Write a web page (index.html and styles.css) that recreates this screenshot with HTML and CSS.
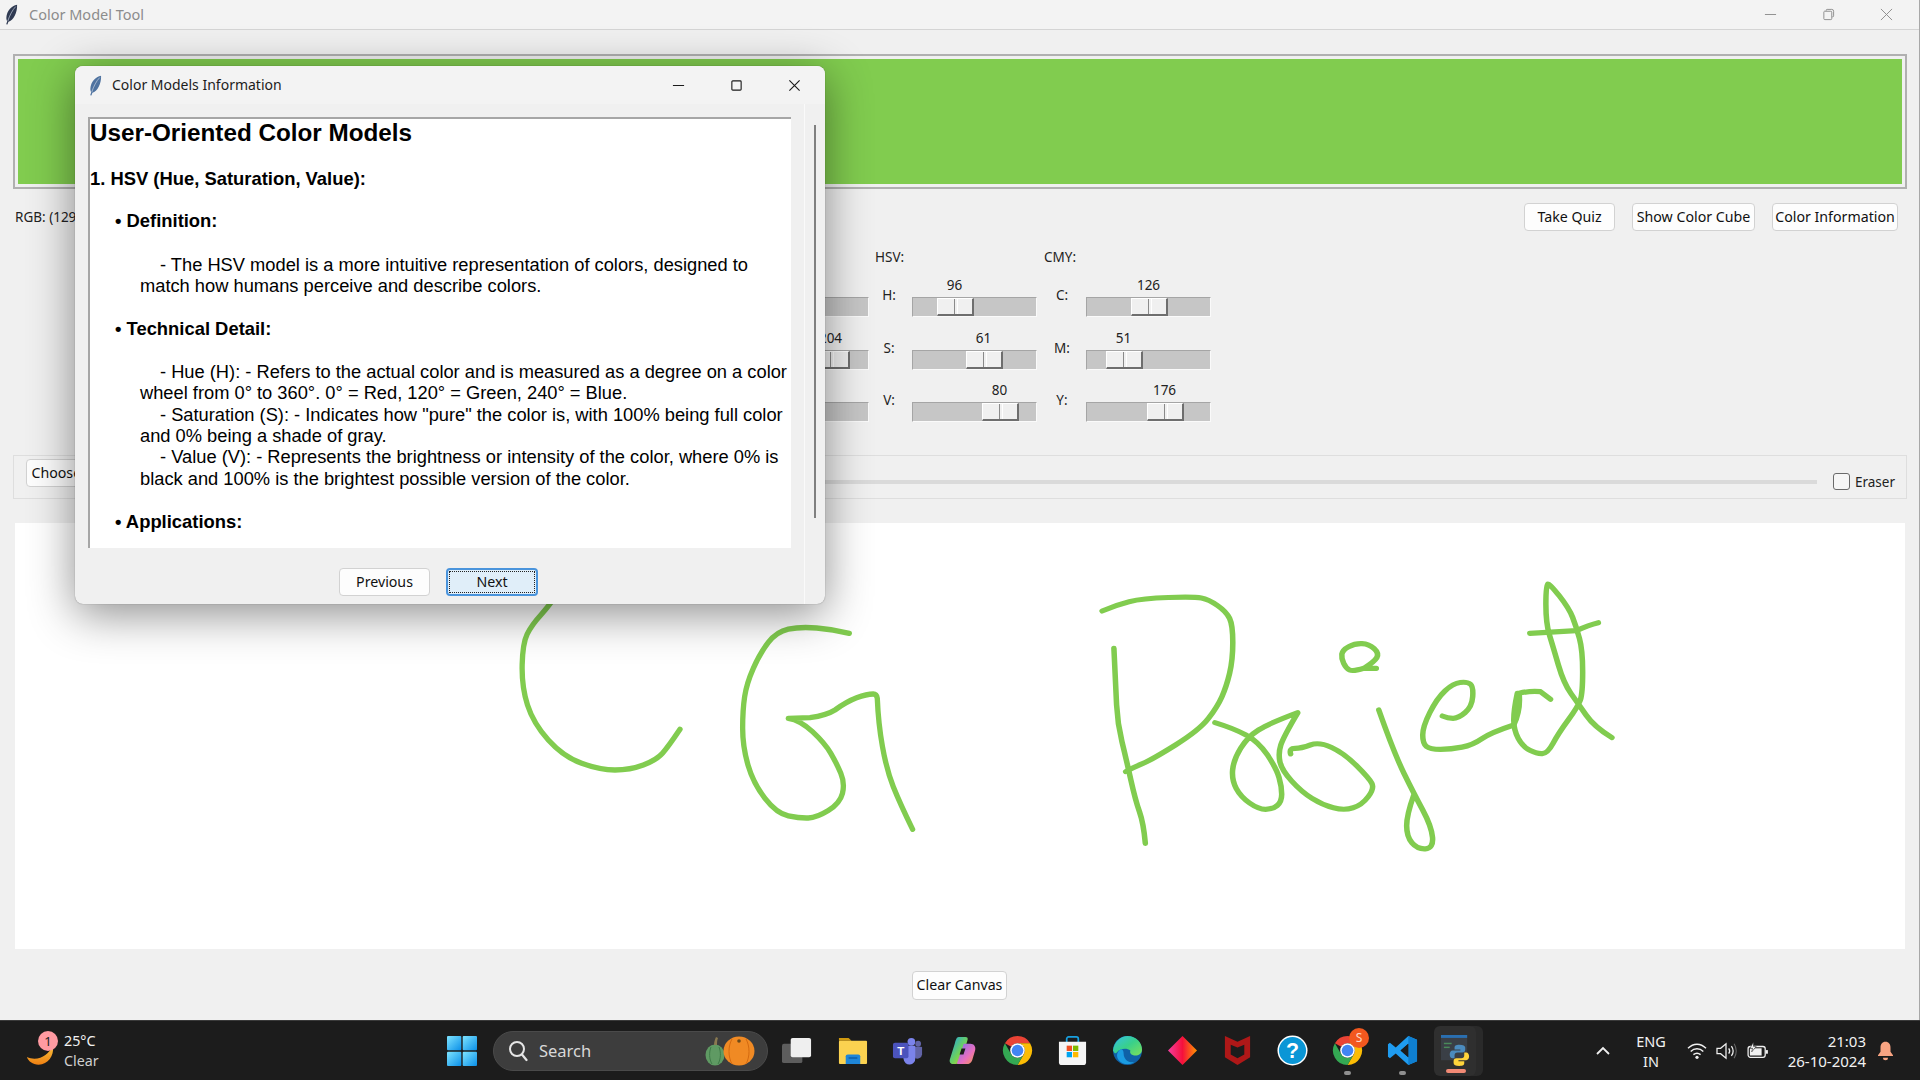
FILE: index.html
```html
<!DOCTYPE html>
<html lang="en">
<head>
<meta charset="utf-8">
<title>Color Model Tool</title>
<link rel="stylesheet" href="styles.css">
</head>
<body>
<svg class="defs" width="0" height="0" aria-hidden="true">
  <defs>
    <symbol id="feather" viewBox="0 0 14 22">
      <path d="M13 .5C7 1.500 2 7 1.500 14c-.2 1.800.3 3.300.9 4.300L1.300 21.500l1.300.3 1.100-3.100C9 17.500 13.500 9 13 .5Z"/>
      <path d="M3 18C5 12 8 6 11.500 2.500" fill="none" stroke="#cfd8e6" stroke-width=".7"/>
    </symbol>
    <symbol id="chrome" viewBox="0 0 32 32">
      <path fill="#ea4335" d="M3 8.500A15 15 0 0 1 29 8.500H16A7.500 7.500 0 0 0 9.500 12.250Z"/>
      <path fill="#fbbc04" d="M29 8.500A15 15 0 0 1 16 31L22.500 19.750A7.500 7.500 0 0 0 16 8.500Z"/>
      <path fill="#34a853" d="M16 31A15 15 0 0 1 3 8.500L9.500 19.750A7.500 7.500 0 0 0 22.500 19.750Z"/>
      <circle cx="16" cy="16" r="7.500" fill="#fff"/>
      <circle cx="16" cy="16" r="6" fill="#4285f4"/>
    </symbol>
    <linearGradient id="winGrad" x1="0" y1="0" x2="1" y2="1">
      <stop offset="0" stop-color="#7ee4ff"/><stop offset="1" stop-color="#0a8fe8"/>
    </linearGradient>
    <linearGradient id="diaGrad" x1="0" y1="0" x2="1" y2="0">
      <stop offset="0" stop-color="#f43fa0"/><stop offset=".5" stop-color="#f5103c"/><stop offset="1" stop-color="#ff9500"/>
    </linearGradient>
    <linearGradient id="edgeGrad" x1="0" y1="0" x2="1" y2="1">
      <stop offset="0" stop-color="#35c1e8"/><stop offset=".5" stop-color="#39d08a"/><stop offset="1" stop-color="#7ee05a"/>
    </linearGradient>
    <linearGradient id="copA" x1="0" y1="0" x2="1" y2="1">
      <stop offset="0" stop-color="#1aa3e8"/><stop offset=".55" stop-color="#6fd25a"/><stop offset="1" stop-color="#f2c230"/>
    </linearGradient>
    <linearGradient id="copB" x1="0" y1="0" x2="1" y2="1">
      <stop offset="0" stop-color="#7a6ff0"/><stop offset=".6" stop-color="#e86fc0"/><stop offset="1" stop-color="#f59a4a"/>
    </linearGradient>
    <linearGradient id="moonGrad" x1="0" y1="0" x2="0" y2="1">
      <stop offset="0" stop-color="#f9c23c"/><stop offset="1" stop-color="#ee7f12"/>
    </linearGradient>
  </defs>
</svg>

<div class="desktop">
  <main class="window">
    <header class="titlebar">
      <svg class="feather feather-main"><use href="#feather"/></svg>
      <span class="title-text">Color Model Tool</span>
      <div class="win-controls">
        <svg class="wc" viewBox="0 0 14 14"><path d="M1 7h12" stroke="#8a8a8a" fill="none"/></svg>
        <svg class="wc" viewBox="0 0 14 14"><path d="M4.500 3V2.500a1 1 0 0 1 1-1h5a2 2 0 0 1 2 2v5a1 1 0 0 1-1 1H11M2.500 3.500h7a1 1 0 0 1 1 1v7a1 1 0 0 1-1 1h-6.500a1 1 0 0 1-1-1v-7a1 1 0 0 1 .5-1Z" stroke="#8a8a8a" fill="none"/></svg>
        <svg class="wc" viewBox="0 0 14 14"><path d="M1 1l12 12M13 1L1 13" stroke="#8a8a8a" fill="none"/></svg>
      </div>
    </header>

    <div class="content">
      <div class="preview"><div class="swatch"></div></div>

      <div class="info-row">
        <span class="rgb-text">RGB: (129, 204, 79)</span>
        <div class="info-buttons">
          <button class="btn btn-quiz">Take Quiz</button>
          <button class="btn btn-cube">Show Color Cube</button>
          <button class="btn btn-info">Color Information</button>
        </div>
      </div>

      <div class="sliders">
        <section class="group group-rgb">
          <div class="group-title">RGB:</div>
          <div class="group-grid">
            <span class="axis">R:</span><div class="scale"><div class="scale-val" style="margin-left:43px">129</div><div class="track"><div class="thumb" style="margin-left:43px"></div></div></div>
            <span class="axis">G:</span><div class="scale"><div class="scale-val" style="margin-left:68px">204</div><div class="track"><div class="thumb" style="margin-left:68px"></div></div></div>
            <span class="axis">B:</span><div class="scale"><div class="scale-val" style="margin-left:26px">79</div><div class="track"><div class="thumb" style="margin-left:26px"></div></div></div>
          </div>
        </section>
        <section class="group group-hsv">
          <div class="group-title">HSV:</div>
          <div class="group-grid">
            <span class="axis">H:</span><div class="scale"><div class="scale-val" style="margin-left:24px">96</div><div class="track"><div class="thumb" style="margin-left:24px"></div></div></div>
            <span class="axis">S:</span><div class="scale"><div class="scale-val" style="margin-left:53px">61</div><div class="track"><div class="thumb" style="margin-left:53px"></div></div></div>
            <span class="axis">V:</span><div class="scale"><div class="scale-val" style="margin-left:69px">80</div><div class="track"><div class="thumb" style="margin-left:69px"></div></div></div>
          </div>
        </section>
        <section class="group group-cmy">
          <div class="group-title">CMY:</div>
          <div class="group-grid">
            <span class="axis">C:</span><div class="scale"><div class="scale-val" style="margin-left:44px">126</div><div class="track"><div class="thumb" style="margin-left:44px"></div></div></div>
            <span class="axis">M:</span><div class="scale"><div class="scale-val" style="margin-left:19px">51</div><div class="track"><div class="thumb" style="margin-left:19px"></div></div></div>
            <span class="axis">Y:</span><div class="scale"><div class="scale-val" style="margin-left:60px">176</div><div class="track"><div class="thumb" style="margin-left:60px"></div></div></div>
          </div>
        </section>
      </div>

      <div class="tools">
        <button class="btn btn-choose">Choose Color</button>
        <div class="size-line"></div>
        <span class="checkbox"></span>
        <span class="eraser">Eraser</span>
      </div>

      <div class="canvas">
        <svg class="drawing" viewBox="0 0 1890 426">
          <g transform="translate(-15 -523)" fill="none" stroke="#81cc4f" stroke-linecap="round" stroke-linejoin="round">
            <g transform="translate(500 570) scale(.3333)" stroke-width="16">
              <path d="M175 65Q150 105 122.500 135Q95 165 81.500 192.500Q68 220 66.500 285Q65 350 82.500 405Q100 460 145 510Q190 560 245 580Q300 600 345 600Q390 600 430 585Q470 570 487.500 550Q505 530 540 478"/>
              <path d="M1048 190Q1000 178 950 174Q900 170 865 177.500Q830 185 805 217.500Q780 250 760 295Q740 340 734 380Q728 420 728 475Q728 530 744 585Q760 640 795 685Q830 730 865 737.500Q900 745 925 744Q950 743 985 721.500Q1020 700 1027.500 670Q1035 640 1022.500 610Q1010 580 992.500 550Q975 520 937.500 485Q900 450 865 445L930 443Q980 436 1005 420Q1040 395 1070 383.500Q1100 372 1120 372Q1130 372 1132 385Q1135 460 1147.500 530Q1160 600 1180 650Q1200 700 1238 778"/>
            </g>
            <g transform="translate(1080 560) scale(.357 .3333)" stroke-width="15.500">
              <path d="M95 265Q100 380 102.500 435Q105 490 117.500 545Q130 600 142.500 660Q155 720 166.500 755Q178 790 183 850"/>
              <path d="M62 153Q100 135 137.500 125Q175 115 247.500 112.500Q320 110 340 114Q360 118 385 136.500Q410 155 419 175Q428 195 428 247.500Q428 300 419 340Q410 380 397.500 410Q385 440 360 475Q335 510 267.500 555Q200 600 175 611Q150 622 128 635"/>
              <path d="M378 488Q430 505 465 525Q500 545 525 585Q550 625 557.500 652.500Q565 680 565 702.500Q565 725 552.500 736.500Q540 748 520 748Q500 748 475 729Q450 710 437.500 685Q425 660 427.500 630Q430 600 450 565Q470 530 500 510Q530 490 610 458Q570 530 562.500 555Q555 580 560 605Q565 630 592.500 662.500Q620 695 650 715Q680 735 710 743.500Q740 752 765 743.500Q790 735 807.500 710Q825 685 817.500 670Q810 655 775 617.500Q740 580 705 562.500Q670 545 645 555Q620 565 602.500 565Q585 565 590 582"/>
              <path d="M830 325L795 325Q825 305 831.500 292.500Q838 280 824 266Q810 252 790 251Q770 250 752.500 260Q735 270 733.500 282.500Q732 295 738.500 310Q745 325 755 330Q765 335 795 325"/>
              <path d="M837 450Q880 580 907.500 640Q935 700 960 750Q985 800 987.500 832.500Q990 865 967.500 866.500Q945 868 930 849Q915 830 915 797.500Q915 765 935 705"/>
              <path d="M1015 468Q1030 475 1045 475Q1060 475 1079 457.500Q1098 440 1100 410Q1102 380 1093.500 372.500Q1085 365 1065 367.500Q1045 370 1022.500 392.500Q1000 415 980 457.500Q960 500 960 525Q960 550 970 559Q980 568 1010 568Q1040 568 1070 561.500Q1100 555 1125 536.500Q1150 518 1215 495Q1235 450 1230 400Q1260 392 1290 395L1318 418"/>
              <path d="M1225 400Q1215 450 1215 480Q1215 510 1227.500 535Q1240 560 1260 571Q1280 582 1295 581Q1310 580 1325 550Q1340 520 1367.500 480Q1395 440 1401.500 420Q1408 400 1408 335Q1408 270 1399 235Q1390 200 1380 172.500Q1370 145 1342.500 107.500Q1315 70 1310 72.500Q1305 75 1305 132.500Q1305 190 1315 225Q1325 260 1340 315Q1355 370 1375 400Q1395 430 1417.500 465Q1440 500 1490 533"/>
              <path d="M1260 220L1390 212Q1425 195 1452 188"/>
            </g>
          </g>
        </svg>
      </div>

      <div class="clear-row"><button class="btn btn-clear">Clear Canvas</button></div>
    </div>
  </main>

  <section class="dialog">
    <header class="dialog-bar">
      <svg class="feather feather-dialog"><use href="#feather"/></svg>
      <span class="dialog-title">Color Models Information</span>
      <div class="dialog-controls">
        <svg class="dc" viewBox="0 0 14 14"><path d="M1 7h12" stroke="#1a1a1a" stroke-width="1.200" fill="none"/></svg>
        <svg class="dc" viewBox="0 0 14 14"><rect x="2" y="2" width="10" height="10" rx="1" stroke="#1a1a1a" stroke-width="1.200" fill="none"/></svg>
        <svg class="dc" viewBox="0 0 14 14"><path d="M1.500 1.500l11 11M12.500 1.500l-11 11" stroke="#1a1a1a" stroke-width="1.200" fill="none"/></svg>
      </div>
    </header>
    <div class="dialog-body">
      <div class="dialog-main">
        <article class="doc">
          <h1 class="doc-h1">User-Oriented Color Models</h1>
          <h2 class="doc-h2">1. HSV (Hue, Saturation, Value):</h2>
          <h3 class="doc-h3">• Definition:</h3>
          <p class="doc-p">- The HSV model is a more intuitive representation of colors, designed to<br>match how humans perceive and describe colors.</p>
          <h3 class="doc-h3">• Technical Detail:</h3>
          <p class="doc-p">- Hue (H): - Refers to the actual color and is measured as a degree on a color<br>wheel from 0° to 360°. 0° = Red, 120° = Green, 240° = Blue.</p>
          <p class="doc-p doc-cont">- Saturation (S): - Indicates how "pure" the color is, with 100% being full color<br>and 0% being a shade of gray.</p>
          <p class="doc-p doc-cont">- Value (V): - Represents the brightness or intensity of the color, where 0% is<br>black and 100% is the brightest possible version of the color.</p>
          <h3 class="doc-h3">• Applications:</h3>
        </article>
        <div class="dialog-buttons">
          <button class="btn btn-prev">Previous</button>
          <button class="btn btn-next"><span class="focus-ring">Next</span></button>
        </div>
      </div>
      <div class="doc-scroll"><div class="doc-scroll-thumb"></div></div>
    </div>
  </section>

  <footer class="taskbar">
    <div class="tb-left">
      <div class="weather-icon">
        <svg class="moon" viewBox="0 0 30 20"><path d="M28 0c1 10-5 19-15 19C7 19 2 15 1 11c6 3 14 2 19-2 3-2 6-6 8-9Z" fill="url(#moonGrad)"/></svg>
        <span class="badge">1</span>
      </div>
      <div class="weather-text"><span class="temp">25°C</span><span class="cond">Clear</span></div>
    </div>
    <div class="tb-center">
      <svg class="start" viewBox="0 0 30 30">
        <rect x="0" y="0" width="14.300" height="14.300" rx="1" fill="url(#winGrad)"/><rect x="15.700" y="0" width="14.300" height="14.300" rx="1" fill="url(#winGrad)"/>
        <rect x="0" y="15.700" width="14.300" height="14.300" rx="1" fill="url(#winGrad)"/><rect x="15.700" y="15.700" width="14.300" height="14.300" rx="1" fill="url(#winGrad)"/>
      </svg>
      <div class="search">
        <svg class="search-glass" viewBox="0 0 20 22"><circle cx="9" cy="9" r="7" fill="none" stroke="#e6e6e6" stroke-width="2"/><path d="M14 14.500l4.500 5.500" stroke="#e6e6e6" stroke-width="2.200" stroke-linecap="round"/></svg>
        <span class="search-text">Search</span>
        <svg class="pumpkins" viewBox="0 0 52 30">
          <ellipse cx="11" cy="19" rx="9.500" ry="10.500" fill="#5f9a63"/><path d="M10 9c0-3 1-6 2-8l2 1c-1 2-1 5-1 7Z" fill="#8a7a50"/><path d="M7 11c-2 5-2 12 1 17M15 11c2 5 2 12-1 17" stroke="#3f7a48" fill="none"/>
          <ellipse cx="35" cy="15" rx="15.500" ry="14.500" fill="#f08a24"/><path d="M28 3c-4 7-4 18 0 25M42 3c4 7 4 18 0 25" stroke="#d46a10" fill="none"/><circle cx="35" cy="5" r="1.800" fill="#6a4a1a"/>
        </svg>
      </div>
      <div class="apps">
        <div class="app"><svg viewBox="0 0 32 32"><rect x="0" y="9" width="21" height="20" rx="2" fill="#5d5d5d"/><rect x="9" y="3" width="21" height="20" rx="2" fill="#efefef"/></svg></div>
        <div class="app"><svg viewBox="0 0 32 32"><path d="M2 3h10l3 3H2Z" fill="#d09a10"/><rect x="2" y="6" width="29" height="24" rx="1" fill="#fbd250"/><path d="M9 22a2 2 0 0 1 2-2h11a2 2 0 0 1 2 2v8H9Z" fill="#1f86d8"/><rect x="12" y="23" width="9" height="1.500" fill="#0d5ea8"/></svg></div>
        <div class="app"><svg viewBox="0 0 32 32"><circle cx="20" cy="7" r="4" fill="#7b83eb"/><circle cx="27" cy="9" r="3" fill="#6264a7"/><path d="M22 12h8a1 1 0 0 1 1 1v7a5 5 0 0 1-7 4Z" fill="#6264a7"/><path d="M9 11h15v13a6 6 0 0 1-12 1Z" fill="#7b83eb"/><rect x="1" y="8" width="16" height="16" rx="2" fill="#4b53bc"/><text x="9" y="20.500" class="t-letter">T</text></svg></div>
        <div class="app"><svg viewBox="0 0 32 32"><path d="M12 2h7c2 0 3 1 2 4l-6 19c-1 3-3 5-6 5H6c-2 0-4-2-3-5l5-16c1-4 2-7 4-7Z" fill="url(#copA)"/><path d="M18 9h6c4 0 6 3 5 7l-3 10c-1 3-3 4-6 4h-8c-2 0-2-1-1-3l6-17c0-1 0-1 1-1Z" fill="url(#copB)"/><path d="M15 14h4l-2 6h-4Z" fill="#1c1c1c"/></svg></div>
        <div class="app"><svg viewBox="0 0 32 32"><use href="#chrome"/></svg></div>
        <div class="app"><svg viewBox="0 0 32 32"><path d="M10 8V4a2 2 0 0 1 2-2h8a2 2 0 0 1 2 2v4" fill="none" stroke="#18a0e0" stroke-width="1.800"/><path d="M2 7h28v21a3 3 0 0 1-3 3H5a3 3 0 0 1-3-3Z" fill="#f5f5f5"/><rect x="10" y="11" width="5.500" height="5.500" fill="#f25022"/><rect x="16.500" y="11" width="5.500" height="5.500" fill="#7fba00"/><rect x="10" y="17.500" width="5.500" height="5.500" fill="#00a4ef"/><rect x="16.500" y="17.500" width="5.500" height="5.500" fill="#ffb900"/></svg></div>
        <div class="app"><svg viewBox="0 0 32 32"><circle cx="16" cy="16" r="15" fill="#0f62a8"/><path d="M1 16C2 7 9 1 16 1c9 0 15 7 15 14 0 5-5 7-9 6-3-1-4-3-3-5-4-3-11-2-14 2-1 1-2 2-4-2Z" fill="url(#edgeGrad)"/><path d="M12 19c0 6 5 10 11 9-5 3-12 3-16-2-3-4-2-9 2-11 2-1 3 2 3 4Z" fill="#1b9de2"/></svg></div>
        <div class="app"><svg viewBox="0 0 32 32"><path d="M16 1l15 15-15 15L1 16Z" fill="url(#diaGrad)"/></svg></div>
        <div class="app"><svg viewBox="0 0 32 32"><path d="M3 1l13 6 13-6v22L16 31 3 23Z" fill="#c01818" opacity=".9"/><path d="M9 10l7 3 7-3v10l-7 4-7-4Z" fill="#1c1c1c"/></svg></div>
        <div class="app"><svg viewBox="0 0 32 32"><circle cx="16" cy="16" r="15.500" fill="#fff"/><circle cx="16" cy="16" r="14" fill="#0a96d6"/><text x="16" y="24" class="t-help">?</text></svg></div>
        <div class="app app-badge">
          <svg viewBox="0 0 32 32"><use href="#chrome"/></svg>
          <span class="s-badge">S</span>
          <span class="run-dot"></span>
        </div>
        <div class="app app-run"><svg viewBox="0 0 32 32"><path d="M22 1l9 4v22l-9 4L9 19l-6 5-2-1.500V9.500L3 8l6 5Z" fill="#1f9cf0"/><path d="M22 9l-8 7 8 7Z" fill="#1c1c1c"/><path d="M22 1l9 4v22l-9 4Z" fill="#0f7fd0"/><path d="M22 9v14l-8-7Z" fill="#1c1c1c"/></svg><span class="run-dot"></span></div>
        <div class="app app-active">
          <span class="active-back"></span>
          <span class="active-plate"></span>
          <svg viewBox="0 0 32 32"><rect x="0" y="0" width="27" height="26" fill="#3a3f46"/><rect x="0" y="0" width="27" height="3" fill="#2a6fb0"/><rect x="3" y="8" width="8" height="1.500" fill="#4a8a5a"/><rect x="3" y="12" width="6" height="1.500" fill="#4a8a5a"/><path d="M19 10c-4 0-5 1-5 3v2h6v1h-8c-2 0-3 2-3 4s1 4 3 4h2v-3c0-2 1-3 3-3h5c2 0 3-1 3-3v-2c0-2-2-3-6-3Z" fill="#4b8bbe"/><path d="M19 32c4 0 5-1 5-3v-2h-6v-1h8c2 0 3-2 3-4s-1-4-3-4h-2v3c0 2-1 3-3 3h-5c-2 0-3 1-3 3v2c0 2 2 3 6 3Z" fill="#ffd43b"/></svg>
          <span class="active-line"></span>
        </div>
      </div>
    </div>
    <div class="tray">
      <svg class="chev" viewBox="0 0 16 10"><path d="M2 8l6-6 6 6" fill="none" stroke="#f0f0f0" stroke-width="1.800"/></svg>
      <div class="lang"><span>ENG</span><span>IN</span></div>
      <svg class="wifi" viewBox="0 0 24 20"><path d="M2 7c6-6 14-6 20 0M5 10.500c4-4 10-4 14 0M8 14c2.500-2 5.500-2 8 0" fill="none" stroke="#f0f0f0" stroke-width="1.600"/><circle cx="12" cy="17" r="1.800" fill="#f0f0f0"/></svg>
      <svg class="speaker" viewBox="0 0 24 20"><path d="M2 7h4l6-5v16l-6-5H2Z" fill="none" stroke="#f0f0f0" stroke-width="1.400"/><path d="M15 7c1.500 2 1.500 4 0 6M18 4.500c2.500 3.500 2.500 7.500 0 11" fill="none" stroke="#f0f0f0" stroke-width="1.400"/><path d="M21 2c3 5 3 11 0 16" fill="none" stroke="#666" stroke-width="1.200"/></svg>
      <svg class="battery" viewBox="0 0 24 20"><rect x="1" y="5" width="19" height="12" rx="2.500" fill="none" stroke="#f0f0f0" stroke-width="1.400"/><rect x="3" y="7" width="13" height="8" fill="#f0f0f0"/><rect x="20.500" y="9" width="2.500" height="4" fill="#f0f0f0"/><path d="M7 0L3 7h3l-1 4 5-6H7Z" fill="#f0f0f0" stroke="#1c1c1c" stroke-width=".6"/></svg>
      <div class="clock"><span>21:03</span><span>26-10-2024</span></div>
      <svg class="bell" viewBox="0 0 20 24"><path d="M10 1c-4 0-6 3-6 7v5l-3 4v1h18v-1l-3-4V8c0-4-2-7-6-7Z" fill="#f9a482"/><path d="M7 20h6c0 2-1 3-3 3s-3-1-3-3Z" fill="#f9a482"/></svg>
    </div>
  </footer>
</div>
</body>
</html>
```

FILE: styles.css
```css
* { box-sizing: border-box; }
html, body { margin: 0; padding: 0; }
body { width: 1920px; height: 1080px; overflow: hidden; font-family: "Noto Sans", "Liberation Sans", sans-serif; background: #f0f0f0; }
.defs { position: absolute; }
.desktop { position: relative; width: 1920px; height: 1080px; display: flex; flex-direction: column; overflow: hidden; }

/* main window */
.window { height: 1020px; display: flex; flex-direction: column; background: #f0f0f0; border-right: 1px solid #a8a8a8; }
.titlebar { height: 30px; flex: none; display: flex; align-items: center; background: #f3f3f3; border-bottom: 1px solid #d4d4d4; padding-left: 5px; }
.feather { fill: #2f3a52; }
.feather-main { width: 13px; height: 21px; }
.title-text { margin: 0 0 2px 11px; font-size: 14.500px; color: #8c8c8c; }
.win-controls { margin-left: auto; display: flex; gap: 45px; padding-right: 26px; }
.wc { width: 13px; height: 13px; }

.content { flex: 1; display: flex; flex-direction: column; padding: 0 12px 0 13px; }
.preview { margin-top: 24px; height: 135px; border: 2px solid #b0b0b0; padding: 3px; flex: none; }
.swatch { height: 100%; background: #81cc4f; }

.info-row { margin-top: 14px; height: 28px; display: flex; align-items: center; justify-content: space-between; padding: 0 9px 0 2px; flex: none; }
.rgb-text { font-size: 13.500px; color: #222; }
.info-buttons { display: flex; gap: 17px; }

.btn { font-family: "Noto Sans", "Liberation Sans", sans-serif; font-size: 14.200px; color: #111; background: #fdfdfd; border: 1px solid #d2d2d2; border-radius: 4px; padding: 0; height: 28px; line-height: 1; }
.btn-quiz { width: 91px; }
.btn-cube { width: 123px; }
.btn-info { width: 126px; }

.sliders { margin-top: 16px; display: flex; padding-left: 687px; flex: none; }
.group { display: flex; flex-direction: column; }
.group-title { height: 20px; line-height: 20px; font-size: 13.500px; color: #222; margin-bottom: 8px; }
.group-grid { display: grid; row-gap: 10.500px; grid-auto-rows: 42px; }
.group-rgb { width: 175px; }
.group-rgb .group-grid { grid-template-columns: 44px 125px; }
.group-hsv { width: 169px; }
.group-hsv .group-grid { grid-template-columns: 37px 125px; }
.group-hsv .axis { width: 28px; }
.group-cmy .group-grid { grid-template-columns: 42px 125px; }
.group-cmy .axis { width: 36px; }
.axis { align-self: start; margin-top: 10px; text-align: center; font-size: 13.500px; line-height: 20px; color: #222; }
.scale { width: 125px; }
.scale-val { width: 37px; height: 22px; line-height: 20px; text-align: center; font-size: 13.500px; color: #222; white-space: nowrap; }
.track { height: 20px; background: #c6c6c6; border-top: 1px solid #a5a5a5; border-left: 1px solid #a5a5a5; border-bottom: 1px solid #fafafa; border-right: 1px solid #fafafa; }
.thumb { position: relative; width: 37px; height: 18px; background: #f0f0f0; border-top: 1px solid #fff; border-left: 1px solid #fff; border-right: 2px solid #6e6e6e; border-bottom: 2px solid #6e6e6e; }
.thumb::after { content: ""; position: absolute; left: 16px; top: 0; bottom: 0; width: 2px; border-left: 1px solid #8a8a8a; border-right: 1px solid #fff; }

.tools { margin-top: 33px; height: 44px; flex: none; display: flex; align-items: flex-start; border: 1px solid #dedede; padding: 3px 11px 0 12px; }
.btn-choose { width: 100px; flex: none; }
.size-line { flex: 1; height: 4px; margin: 21px 16px 0 10px; background: #dadada; }
.checkbox { width: 17px; height: 17px; margin-top: 14px; border: 1px solid #6a6a6a; border-radius: 3px; background: #f6f6f6; flex: none; }
.eraser { margin: 13px 0 0 5px; font-size: 13.500px; line-height: 20px; color: #222; }

.canvas { margin: 24px 2px 0; height: 426px; background: #fff; flex: none; }
.drawing { display: block; width: 1890px; height: 426px; }
.clear-row { margin-top: 22px; display: flex; justify-content: center; padding-right: 1px; }
.btn-clear { width: 95px; height: 29px; }

/* dialog */
.dialog { position: absolute; left: 75px; top: 66px; width: 750px; height: 538px; background: #f0f0f0; border-radius: 8px; box-shadow: 0 10px 46px rgba(0,0,0,.45), 0 0 1px rgba(0,0,0,.5); display: flex; flex-direction: column; overflow: hidden; }
.dialog-bar { height: 38px; flex: none; display: flex; align-items: center; background: #f3f3f3; padding-left: 14px; }
.feather-dialog { width: 13px; height: 21px; fill: #4f73a0; }
.dialog-title { margin: 0 0 2px 10px; font-size: 14px; color: #1c1c1c; }
.dialog-controls { margin-left: auto; display: flex; gap: 45px; padding-right: 24px; align-items: center; }
.dc { width: 13px; height: 13px; }
.dialog-body { flex: 1; display: flex; min-height: 0; }
.dialog-main { width: 730px; flex: none; padding: 13px 13px 0 13px; border-right: 1px solid #fafafa; }
.doc { height: 431px; background: #fff; border-top: 2px solid #a6a6a6; border-left: 2px solid #a6a6a6; overflow: hidden; font-family: "Liberation Sans", Arial, sans-serif; color: #000; white-space: nowrap; }
.doc-h1 { margin: 0; font-size: 24.250px; line-height: 28px; font-weight: 700; }
.doc-h2 { margin: 20.500px 0 3px; font-size: 18.400px; line-height: 21.330px; font-weight: 700; }
.doc-h3 { margin: 21.500px 0 0 25px; font-size: 18.400px; line-height: 21.330px; font-weight: 700; }
.doc-p { margin: 22px 0 0 50px; font-size: 18.300px; line-height: 21.330px; text-indent: 20px; }
.doc-cont { margin-top: 0; }
.dialog-buttons { display: flex; justify-content: flex-start; gap: 16px; margin-top: 20px; padding-left: 251px; }
.btn-prev { width: 91px; flex: none; }
.btn-next { width: 92px; flex: none; background: #e0eef9; border: 2px solid #4a94dc; padding: 1px; }
.focus-ring { display: flex; align-items: center; justify-content: center; height: 100%; border: 1px dotted #222; }
.doc-scroll { flex: 1; padding: 21px 0 0 9px; }
.doc-scroll-thumb { width: 2px; height: 393px; background: #808080; }

/* taskbar */
.taskbar { height: 60px; flex: none; display: flex; align-items: center; background: #1c1c1c; border-top: 1px solid #3a3a3a; color: #f2f2f2; font-family: "Noto Sans", "Liberation Sans", sans-serif; }
.tb-left { width: 447px; flex: none; display: flex; align-items: center; padding-left: 26px; }
.weather-icon { position: relative; width: 38px; height: 40px; flex: none; }
.moon { position: absolute; left: 0; top: 15px; width: 29px; height: 20px; }
.badge { position: absolute; left: 12px; top: 0; width: 20px; height: 20px; border-radius: 50%; background: #ff9aa2; color: #1c1c1c; font-size: 13px; line-height: 20px; text-align: center; }
.weather-text { display: flex; flex-direction: column; font-size: 14.300px; line-height: 20px; }
.cond { color: #cfcfcf; }
.tb-center { display: flex; align-items: center; }
.start { width: 30px; height: 30px; flex: none; }
.search { margin-left: 16px; width: 275px; height: 40px; flex: none; border-radius: 20px; background: #3d3d3d; border: 1px solid #4a4a4a; display: flex; align-items: center; padding: 0 11px 0 14px; }
.search-glass { width: 20px; height: 22px; flex: none; }
.search-text { margin-left: 11px; font-size: 16.500px; color: #d8d8d8; }
.pumpkins { margin-left: auto; width: 52px; height: 30px; }
.apps { display: flex; margin-left: 2px; }
.app { position: relative; width: 55px; height: 50px; display: flex; align-items: center; justify-content: center; }
.app svg { width: 31px; height: 31px; display: block; position: relative; }
.t-letter { font: 700 12px "Liberation Sans", sans-serif; fill: #fff; text-anchor: middle; }
.t-help { font: 700 22px "Liberation Sans", sans-serif; fill: #fff; text-anchor: middle; }
.s-badge { position: absolute; left: 29px; top: 2px; width: 20px; height: 20px; border-radius: 50%; background: #f2581f; color: #ffd9c8; font-size: 12px; line-height: 20px; text-align: center; }
.run-dot { position: absolute; left: 24px; bottom: 1px; width: 7px; height: 4px; border-radius: 2px; background: #8f8f8f; }
.active-plate { position: absolute; left: 4px; top: 0; width: 42px; height: 50px; border-radius: 6px; background: #2f2f2f; }
.active-back { position: absolute; left: 36px; top: 0; width: 17px; height: 50px; border-radius: 6px; background: #2a2a2a; }
.active-line { position: absolute; left: 16px; bottom: 3px; width: 20px; height: 4px; border-radius: 2px; background: #f28a75; }
.app-active svg { margin-left: -3px; }
.tray { margin-left: auto; display: flex; align-items: center; padding-right: 26px; }
.chev { width: 16px; height: 10px; flex: none; }
.lang { width: 40px; margin-left: 20px; display: flex; flex-direction: column; align-items: center; font-size: 14.500px; line-height: 20px; }
.wifi { width: 22px; height: 18px; margin-left: 15px; }
.speaker { width: 24px; height: 18px; margin-left: 6px; }
.battery { width: 22px; height: 18px; margin-left: 9px; }
.clock { width: 90px; margin-left: 7px; display: flex; flex-direction: column; align-items: flex-end; font-size: 15px; line-height: 20px; }
.bell { width: 17px; height: 20px; margin-left: 11px; }
```
